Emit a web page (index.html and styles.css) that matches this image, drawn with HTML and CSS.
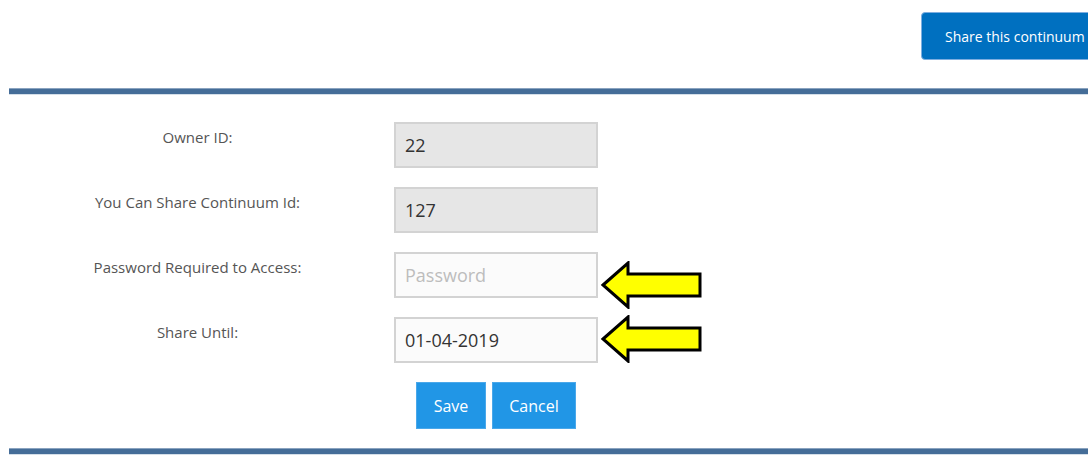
FILE: index.html
```html
<!DOCTYPE html>
<html>
<head>
<meta charset="utf-8">
<link rel="stylesheet" href="styles.css">
</head>
<body>
<div class="page">
  <div class="topbar">
    <button class="share-btn">Share this continuum</button>
  </div>
  <div class="rule"></div>
  <form class="share-form">
    <div class="row">
      <label class="label">Owner ID:</label>
      <div class="field"><input class="input readonly" value="22" readonly></div>
    </div>
    <div class="row">
      <label class="label">You Can Share Continuum Id:</label>
      <div class="field"><input class="input readonly" value="127" readonly></div>
    </div>
    <div class="row">
      <label class="label">Password Required to Access:</label>
      <div class="field">
        <input class="input" placeholder="Password">
        <svg class="arrow arrow-a" width="104" height="48" viewBox="0 0 104 48">
          <polygon points="3,24 28,2 28,13 100,13 100,35 28,35 28,46" fill="#ffff00" stroke="#000" stroke-width="3" stroke-linejoin="miter"/>
        </svg>
      </div>
    </div>
    <div class="row">
      <label class="label">Share Until:</label>
      <div class="field">
        <input class="input" value="01-04-2019">
        <svg class="arrow arrow-b" width="104" height="48" viewBox="0 0 104 48">
          <polygon points="3,24 28,2 28,13 100,13 100,35 28,35 28,46" fill="#ffff00" stroke="#000" stroke-width="3" stroke-linejoin="miter"/>
        </svg>
      </div>
    </div>
    <div class="row actions-row">
      <div class="label"></div>
      <div class="actions">
        <button type="button" class="btn btn-save">Save</button>
        <button type="button" class="btn btn-cancel">Cancel</button>
      </div>
    </div>
  </form>
  <div class="rule"></div>
</div>
</body>
</html>
```

FILE: styles.css
```css
html, body {
  margin: 0;
  padding: 0;
  background: #ffffff;
  overflow: hidden;
}
body {
  font-family: "Open Sans", "Noto Sans", sans-serif;
  color: #555555;
}
.page {
  margin-left: 9px;
  width: 1120px;
}
.topbar {
  display: flex;
  padding: 12px 0 0 912px;
  height: 76px;
  box-sizing: content-box;
}
.share-btn {
  height: 48px;
  width: 200px;
  background: #0070c0;
  color: #ffffff;
  border: 1px solid #7eaee0;
  border-radius: 4px;
  font-family: inherit;
  font-size: 14px;
  text-align: left;
  padding: 0 0 0 23px;
}
.rule {
  height: 5px;
  background: #456d98;
  border-top: 1px solid #8aa3bf;
  border-bottom: 1px solid #d5dfe9;
}
.share-form {
  padding: 27px 0 19px;
  display: flex;
  flex-direction: column;
  gap: 19px;
}
.row {
  display: grid;
  grid-template-columns: 377px 204px;
  column-gap: 8px;
}
.label {
  text-align: center;
  font-size: 15px;
  line-height: 20px;
  padding-top: 5px;
  color: #555555;
}
.field {
  position: relative;
}
.input {
  box-sizing: border-box;
  width: 204px;
  height: 46px;
  border: 2px solid #d3d3d3;
  background: #fbfbfb;
  padding: 0 9px;
  font-family: inherit;
  font-size: 18px;
  color: #333333;
  outline: none;
}
.input.readonly {
  background: #e6e6e6;
}
.input::placeholder {
  color: #bdbdbd;
}
.arrow {
  position: absolute;
  left: 206px;
}
.arrow-a {
  top: 9px;
}
.arrow-b {
  top: -2px;
}
.actions-row .label {
  padding: 0;
}
.actions {
  display: flex;
  justify-content: center;
  gap: 6px;
}
.btn {
  box-sizing: border-box;
  height: 47px;
  background: #2196e6;
  color: #ffffff;
  border: 1px solid #4aa8ea;
  font-family: inherit;
  font-size: 16px;
  padding: 0;
}
.btn-save {
  width: 70px;
}
.btn-cancel {
  width: 84px;
}
```
